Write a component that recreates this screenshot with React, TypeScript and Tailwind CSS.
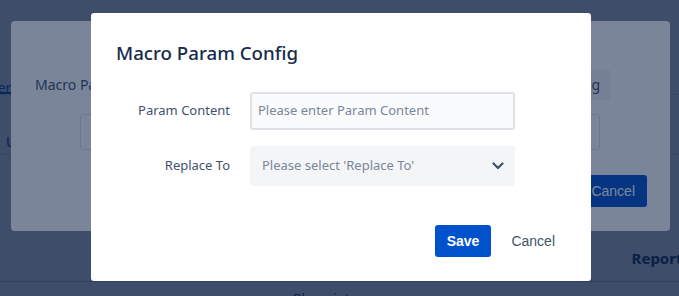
import React from "react";

const sans = { fontFamily: '"Noto Sans", "Open Sans", sans-serif' };

export default function App() {
  return (
    <div
      className="relative w-[679px] h-[296px] overflow-hidden bg-white"
      style={sans}
    >
      {/* underlying page */}
      <div className="flex flex-col w-full h-full">
        <div className="h-[76px]" />
        <div className="flex h-[19px] border-b border-[#dfe1e6]">
          <div className="ml-[-58px] pt-[6px] text-[14px] text-[#0052cc] border-b-2 border-[#0052cc] leading-[11px]">
            Parameter
          </div>
        </div>
        <div className="flex items-center h-[60px] border-b border-[#dfe1e6] pl-[6px] pt-[34px]">
          <span className="text-[14px] text-[#172b4d]">Used</span>
        </div>
        <div className="flex-1 flex items-end justify-end pb-[13px]">
          <span className="text-[15px] font-bold text-[#172b4d] mr-[-11px] leading-[20px]">Reports</span>
        </div>
        <div className="h-[15px] border-t border-[#c1c7d0] pl-[293px] pt-[3px]">
          <span className="text-[13px] text-[#172b4d] leading-none">Blueprint</span>
        </div>
      </div>

      {/* blanket 1 */}
      <div className="absolute inset-0 bg-[rgba(9,30,66,0.54)]" />

      {/* underlying modal */}
      <div className="absolute left-[11px] top-[21px] w-[659px] h-[210px] bg-white rounded-[4px] flex flex-col">
        <div className="flex items-center mt-[48px] h-[31px] pl-[24px] pr-[60px]">
          <span className="text-[14px] text-[#42526e]">Macro Param List</span>
          <div className="ml-auto h-[31px] px-[10px] flex items-center bg-[#f4f5f7] rounded-[3px] text-[14px] text-[#42526e]">
            Add Setting
          </div>
        </div>
        <div className="flex mt-[14px] h-[36px] ml-[69px] mr-[70px]">
          <div className="flex-1 border border-[#dfe1e6] rounded-l-[3px]" />
          <div className="h-full px-[8px] flex items-center border border-[#dfe1e6] rounded-r-[3px] text-[14px] font-bold text-[#172b4d]">
            Search Param
          </div>
        </div>
        <div className="flex justify-end mt-[25px] mr-[23px]">
          <div
            className="h-[32px] px-[12px] flex items-center bg-[#0052cc] rounded-[3px] text-[14px] text-white"
            style={{ fontFamily: '"Liberation Sans", Arial, sans-serif' }}
          >
            Cancel
          </div>
        </div>
      </div>

      {/* blanket 2 */}
      <div className="absolute inset-0 bg-[rgba(9,30,66,0.54)]" />

      {/* top modal */}
      <div className="absolute left-[91px] top-[13px] w-[500px] h-[268px] bg-white rounded-[3px] flex flex-col px-[24px]">
        <div className="mt-[26px] pl-[1px] h-[28px] flex items-center text-[18.7px] font-medium text-[#172b4d]">
          Macro Param Config
        </div>
        <div className="flex flex-col gap-[16px] mt-[25px]">
          <div className="flex items-center">
            <div className="w-[115px] text-right text-[13px] text-[#42526e]">Param Content</div>
            <div className="ml-[20px] w-[265px] h-[38px] border-2 border-[#dfe1e6] bg-[#fafbfc] rounded-[3px] flex items-center pl-[6px] text-[13px] text-[#7a869a]">
              Please enter Param Content
            </div>
          </div>
          <div className="flex items-center">
            <div className="w-[115px] text-right text-[13px] text-[#42526e]">Replace To</div>
            <div className="ml-[20px] w-[265px] h-[40px] bg-[#f4f5f7] rounded-[3px] flex items-center pl-[12px] pr-[11px] text-[13px] text-[#7a869a]">
              <span>Please select 'Replace To'</span>
              <svg className="ml-auto" width="12" height="8" viewBox="0 0 12 8" fill="none">
                <path d="M1.5 1.5 L6 6 L10.5 1.5" stroke="#42526e" strokeWidth="2.2" strokeLinecap="round" strokeLinejoin="round" />
              </svg>
            </div>
          </div>
        </div>
        <div
          className="flex justify-end gap-[8px] mt-[39px]"
          style={{ fontFamily: '"Liberation Sans", Arial, sans-serif' }}
        >
          <div className="h-[32px] px-[12px] flex items-center bg-[#0052cc] rounded-[3px] text-[14px] font-bold text-white">
            Save
          </div>
          <div className="h-[32px] px-[12px] flex items-center rounded-[3px] text-[14px] text-[#42526e]">
            Cancel
          </div>
        </div>
      </div>
    </div>
  );
}
